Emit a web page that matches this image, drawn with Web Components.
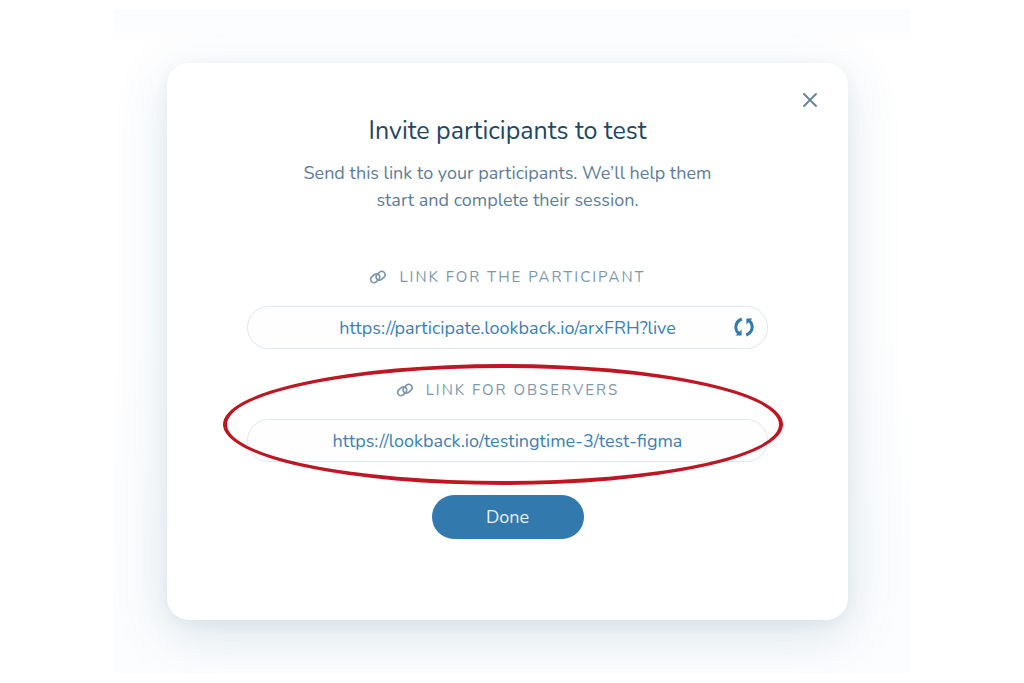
<!DOCTYPE html>
<html lang="en">
<head>
<meta charset="utf-8">
<meta name="viewport" content="width=device-width, initial-scale=1">
<title>Invite participants to test</title>
<style>
  body { margin: 0; background: #fff; font-family: Nunito, "Noto Sans", sans-serif; }
</style>
</head>
<body>
<modal-backdrop>
  <invite-dialog heading="Invite participants to test">
    <span slot="intro">Send this link to your participants. We’ll help them start and complete their session.</span>
    <link-field label="Link for the participant" url="https://participate.lookback.io/arxFRH?live" refreshable></link-field>
    <link-field label="Link for observers" url="https://lookback.io/testingtime-3/test-figma" highlighted></link-field>
    <pill-button slot="action">Done</pill-button>
  </invite-dialog>
</modal-backdrop>

<script>
class BaseElement extends HTMLElement {
  connectedCallback() {
    if (!this.shadowRoot) this.attachShadow({ mode: 'open' }).innerHTML = this.render();
  }
}

customElements.define('modal-backdrop', class extends BaseElement {
  render() {
    return `
      <style>
        :host { display: block; box-sizing: border-box; width: 78%; min-width: 640px; margin: 10px auto;
          padding: 53px 63px 53px 54px; overflow: hidden;
          background: linear-gradient(#fbfcfe, #fff 40px, #fff 50%, #fcfdfe 80%); }
      </style>
      <slot></slot>`;
  }
});

customElements.define('invite-dialog', class extends BaseElement {
  render() {
    return `
      <style>
        :host { display: block; position: relative; padding: 52px 80px 81px; border-radius: 22px; background: #fff;
          text-align: center; box-shadow: 0 14px 52px rgba(40, 98, 130, .17), 0 4px 14px rgba(40, 98, 130, .05); }
        h1 { margin: 0 0 13px; font-size: 25px; line-height: 32px; font-weight: 400; color: #24475f; }
        p { max-width: 420px; margin: 0 auto 51px; font-size: 18px; line-height: 27px; color: #607d96; }
        .fields { display: grid; gap: 29px; margin-bottom: 33px; }
        .close { position: absolute; top: 23px; right: 24px; display: grid; place-items: center;
          width: 28px; height: 28px; padding: 0; border: 0; background: none; color: #68859b; cursor: pointer; }
      </style>
      <button class="close" type="button" aria-label="Close">
        <svg width="16" height="16" viewBox="0 0 16 16" fill="none" stroke="currentColor" stroke-width="2" stroke-linecap="round"><path d="M2 2 14 14M14 2 2 14"/></svg>
      </button>
      <h1>${this.getAttribute('heading')}</h1>
      <p><slot name="intro"></slot></p>
      <div class="fields"><slot></slot></div>
      <slot name="action"></slot>`;
  }
});

customElements.define('link-field', class extends BaseElement {
  render() {
    return `
      <style>
        :host { display: block; position: relative; }
        label { display: flex; align-items: center; justify-content: center; gap: 12px; margin-bottom: 17px;
          font-size: 15px; line-height: 24px; letter-spacing: 2px; text-transform: uppercase; color: #7e96aa; }
        .box { display: flex; position: relative; }
        input { box-sizing: border-box; width: 100%; height: 43px; padding: 0 48px; border: 1px solid #dfe8ee;
          border-radius: 22px; background: #fefefe; outline: 0; text-align: center; font: inherit;
          font-size: 18px; color: #3c80b4; }
        button { position: absolute; top: 9px; right: 12px; width: 24px; height: 24px; padding: 0; border: 0;
          background: none; color: #3279ae; cursor: pointer; }
        button svg { display: block; }
        .ring { position: absolute; inset: -14px -15px -23px -24px; border: 4px solid #be1622;
          border-radius: 50%; pointer-events: none; }
      </style>
      <label for="url">
        <svg width="18" height="16" viewBox="0 0 18 16" fill="none" stroke="currentColor" stroke-width="1.7" aria-hidden="true">
          <rect x="-5" y="-3.3" width="10" height="6.600" rx="3.3" transform="translate(6.2 9.2) rotate(-42)"/>
          <rect x="-5" y="-3.3" width="10" height="6.600" rx="3.3" transform="translate(11.6 6.8) rotate(-42)"/>
        </svg>
        <span>${this.getAttribute('label')}</span>
      </label>
      <div class="box">
        <input id="url" type="text" readonly value="${this.getAttribute('url')}">
        ${this.hasAttribute('refreshable') ? `
        <button type="button" aria-label="Generate a new link">
          <svg width="24" height="24" viewBox="0 0 24 24">
            <path d="M9.8 4C2.4 7.200 2.4 14.600 7 18.600M14.200 20C21.600 16.800 21.600 9.400 17 5.400" fill="none" stroke="currentColor" stroke-width="3"/>
            <path d="M3.600 20.600 9.600 20.600 9.600 14.600ZM20.400 3.400 14.400 3.400 14.400 9.400Z" fill="currentColor"/>
          </svg>
        </button>` : ''}
      </div>
      ${this.hasAttribute('highlighted') ? '<div class="ring"></div>' : ''}`;
  }
});

customElements.define('pill-button', class extends BaseElement {
  render() {
    return `
      <style>
        :host { display: block; }
        button { display: block; width: 152px; height: 44px; margin: 0 auto; padding: 0; border: 0; border-radius: 22px;
          background: #3279ae; color: #e9f1f8; font: inherit; font-size: 18px; cursor: pointer; }
      </style>
      <button type="button"><slot></slot></button>`;
  }
});
</script>
</body>
</html>
